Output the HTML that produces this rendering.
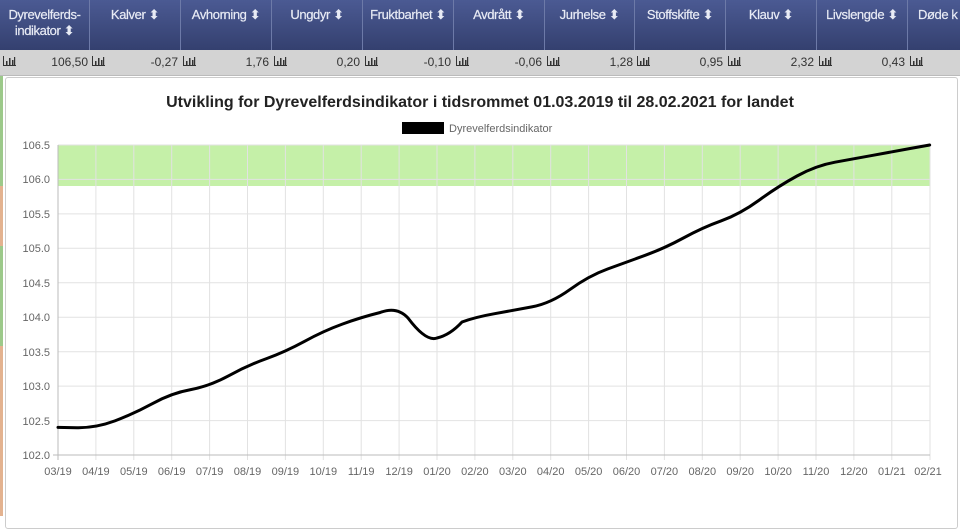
<!DOCTYPE html>
<html><head><meta charset="utf-8"><style>
body{margin:0;width:960px;height:516px;overflow:hidden;background:#fff;font-family:"Liberation Sans",Arial,sans-serif;position:relative}
.hdr{position:absolute;left:0;top:0;width:960px;height:50px;background:linear-gradient(#4b5a93,#34406f);}
.hc{position:absolute;top:0;height:50px;border-left:1px solid #6d7aa8;color:#e8ebf5;font-size:13px;text-align:center;line-height:16px;padding-top:7px;box-sizing:border-box;letter-spacing:-0.4px;-webkit-text-stroke:0.2px #e8ebf5}
.row{position:absolute;left:0;top:50px;width:960px;height:25px;background:#d3d3d3;border-bottom:1px solid #bbb}
.v{position:absolute;top:5px;font-size:12px;color:#333;text-align:right}
.ic{position:absolute;top:6px}
.panel{position:absolute;left:5px;top:77px;width:951px;height:450px;border:1px solid #ccc;border-radius:3px;background:#fff}
.strip{position:absolute;left:0;width:3px}
</style></head><body>
<div class="strip" style="top:76px;height:110px;background:#9cc98a"></div>
<div class="strip" style="top:186px;height:60px;background:#e3b28f"></div>
<div class="strip" style="top:246px;height:100px;background:#9cc98a"></div>
<div class="strip" style="top:346px;height:170px;background:#e3b28f"></div>
<div class="hdr">
<div class="hc" style="left:0;width:89px;border-left:none">Dyrevelferds-<br>indikator ⬍</div>
<div class="hc" style="left:89px;width:91px">Kalver ⬍</div>
<div class="hc" style="left:180px;width:91px">Avhorning ⬍</div>
<div class="hc" style="left:271px;width:91px">Ungdyr ⬍</div>
<div class="hc" style="left:362px;width:91px">Fruktbarhet ⬍</div>
<div class="hc" style="left:453px;width:91px">Avdrått ⬍</div>
<div class="hc" style="left:544px;width:90px">Jurhelse ⬍</div>
<div class="hc" style="left:634px;width:91px">Stoffskifte ⬍</div>
<div class="hc" style="left:725px;width:91px">Klauv ⬍</div>
<div class="hc" style="left:816px;width:91px">Livslengde ⬍</div>
<div class="hc" style="left:907px;width:80px;text-align:left;padding-left:10px">Døde k</div>
</div>
<svg width="0" height="0" style="position:absolute"><defs><g id="bi"><path d="M0.5 0V10M0 9.5H13" stroke="#333" stroke-width="1" fill="none"/><rect x="3" y="5" width="1.5" height="4" fill="#333"/><rect x="6" y="2" width="1.5" height="7" fill="#333"/><rect x="9" y="4" width="1.5" height="5" fill="#333"/><rect x="11" y="1" width="1.2" height="8" fill="#333"/></g></defs></svg>
<div class="row">
<svg class="ic" style="left:3px" width="13" height="11"><use href="#bi"/></svg><span class="v" style="left:40px;width:48px">106,50</span>
<svg class="ic" style="left:92px" width="13" height="11"><use href="#bi"/></svg><span class="v" style="left:130px;width:48px">-0,27</span>
<svg class="ic" style="left:183px" width="13" height="11"><use href="#bi"/></svg><span class="v" style="left:221px;width:48px">1,76</span>
<svg class="ic" style="left:274px" width="13" height="11"><use href="#bi"/></svg><span class="v" style="left:312px;width:48px">0,20</span>
<svg class="ic" style="left:365px" width="13" height="11"><use href="#bi"/></svg><span class="v" style="left:403px;width:48px">-0,10</span>
<svg class="ic" style="left:456px" width="13" height="11"><use href="#bi"/></svg><span class="v" style="left:494px;width:48px">-0,06</span>
<svg class="ic" style="left:547px" width="13" height="11"><use href="#bi"/></svg><span class="v" style="left:585px;width:48px">1,28</span>
<svg class="ic" style="left:637px" width="13" height="11"><use href="#bi"/></svg><span class="v" style="left:675px;width:48px">0,95</span>
<svg class="ic" style="left:728px" width="13" height="11"><use href="#bi"/></svg><span class="v" style="left:766px;width:48px">2,32</span>
<svg class="ic" style="left:819px" width="13" height="11"><use href="#bi"/></svg><span class="v" style="left:857px;width:48px">0,43</span>
<svg class="ic" style="left:910px" width="13" height="11"><use href="#bi"/></svg>
</div>
<div class="panel"></div>
<svg style="position:absolute;left:0;top:0" width="960" height="516" font-family="Liberation Sans, Arial, sans-serif">
<text x="480" y="107" text-anchor="middle" font-size="16" font-weight="bold" fill="#222">Utvikling for Dyrevelferdsindikator i tidsrommet 01.03.2019 til 28.02.2021 for landet</text>
<rect x="402" y="122" width="42" height="12" fill="#000"/>
<text x="449" y="132" font-size="11" fill="#666">Dyrevelferdsindikator</text>
<rect x="58" y="145" width="872" height="41" fill="#c5f0a8"/>
<g stroke="#e2e2e2" stroke-width="1">
<line x1="58" y1="145" x2="930" y2="145"/><line x1="58" y1="179.4" x2="930" y2="179.4"/><line x1="58" y1="213.9" x2="930" y2="213.9"/><line x1="58" y1="248.3" x2="930" y2="248.3"/><line x1="58" y1="282.8" x2="930" y2="282.8"/><line x1="58" y1="317.2" x2="930" y2="317.2"/><line x1="58" y1="351.7" x2="930" y2="351.7"/><line x1="58" y1="386.1" x2="930" y2="386.1"/><line x1="58" y1="420.6" x2="930" y2="420.6"/>
<line x1="95.9" y1="145" x2="95.9" y2="460"/><line x1="133.8" y1="145" x2="133.8" y2="460"/><line x1="171.7" y1="145" x2="171.7" y2="460"/><line x1="209.6" y1="145" x2="209.6" y2="460"/><line x1="247.5" y1="145" x2="247.5" y2="460"/><line x1="285.4" y1="145" x2="285.4" y2="460"/><line x1="323.3" y1="145" x2="323.3" y2="460"/><line x1="361.2" y1="145" x2="361.2" y2="460"/><line x1="399.1" y1="145" x2="399.1" y2="460"/><line x1="437" y1="145" x2="437" y2="460"/><line x1="474.9" y1="145" x2="474.9" y2="460"/><line x1="512.8" y1="145" x2="512.8" y2="460"/><line x1="550.7" y1="145" x2="550.7" y2="460"/><line x1="588.6" y1="145" x2="588.6" y2="460"/><line x1="626.5" y1="145" x2="626.5" y2="460"/><line x1="664.4" y1="145" x2="664.4" y2="460"/><line x1="702.3" y1="145" x2="702.3" y2="460"/><line x1="740.2" y1="145" x2="740.2" y2="460"/><line x1="778.1" y1="145" x2="778.1" y2="460"/><line x1="816" y1="145" x2="816" y2="460"/><line x1="853.9" y1="145" x2="853.9" y2="460"/><line x1="891.8" y1="145" x2="891.8" y2="460"/><line x1="930" y1="145" x2="930" y2="460"/>
</g>
<line x1="58" y1="145" x2="58" y2="460" stroke="#bbb"/><line x1="53" y1="455" x2="930" y2="455" stroke="#bbb"/>
<g font-size="11" fill="#666" text-anchor="end">
<text x="50" y="149">106.5</text><text x="50" y="183">106.0</text><text x="50" y="218">105.5</text><text x="50" y="252">105.0</text><text x="50" y="287">104.5</text><text x="50" y="321">104.0</text><text x="50" y="356">103.5</text><text x="50" y="390">103.0</text><text x="50" y="425">102.5</text><text x="50" y="459">102.0</text>
</g>
<g font-size="11" fill="#666" text-anchor="middle">
<text x="58" y="475">03/19</text><text x="95.9" y="475">04/19</text><text x="133.8" y="475">05/19</text><text x="171.7" y="475">06/19</text><text x="209.6" y="475">07/19</text><text x="247.5" y="475">08/19</text><text x="285.4" y="475">09/19</text><text x="323.3" y="475">10/19</text><text x="361.2" y="475">11/19</text><text x="399.1" y="475">12/19</text><text x="437" y="475">01/20</text><text x="474.9" y="475">02/20</text><text x="512.8" y="475">03/20</text><text x="550.7" y="475">04/20</text><text x="588.6" y="475">05/20</text><text x="626.5" y="475">06/20</text><text x="664.4" y="475">07/20</text><text x="702.3" y="475">08/20</text><text x="740.2" y="475">09/20</text><text x="778.1" y="475">10/20</text><text x="816" y="475">11/20</text><text x="853.9" y="475">12/20</text><text x="891.8" y="475">01/21</text><text x="928" y="475">02/21</text>
</g>
<path fill="none" stroke="#000" stroke-width="3" stroke-linejoin="round" stroke-linecap="round" d="M58,427.4 L77,427.7 Q95.9,428 114.9,420.9 Q133.8,413.7 152.8,403.4 Q171.7,393 190.7,389.6 Q209.6,386.1 228.6,375.8 Q247.5,365.4 266.5,358.6 Q285.4,351.7 304.4,341.4 Q323.3,331 342.3,324.1 Q361.2,317.2 380.2,312.5 Q397,306 408,318 Q426,342 437,338 Q450,335 462,322 Q474.9,317.2 493.9,313.8 Q512.8,310.3 531.8,306.9 Q550.7,303.4 569.7,289.7 Q588.6,275.9 607.6,269 Q626.5,262.1 645.5,255.2 Q664.4,248.3 683.4,238 Q702.3,227.6 721.3,220.8 Q740.2,213.9 759.2,200.1 Q778.1,186.3 797,176 Q816,165.6 835,162.2 Q853.9,158.7 872.9,155.3 Q891.8,151.8 910.8,148.4 L929.7,145"/>
</svg>
</body></html>
